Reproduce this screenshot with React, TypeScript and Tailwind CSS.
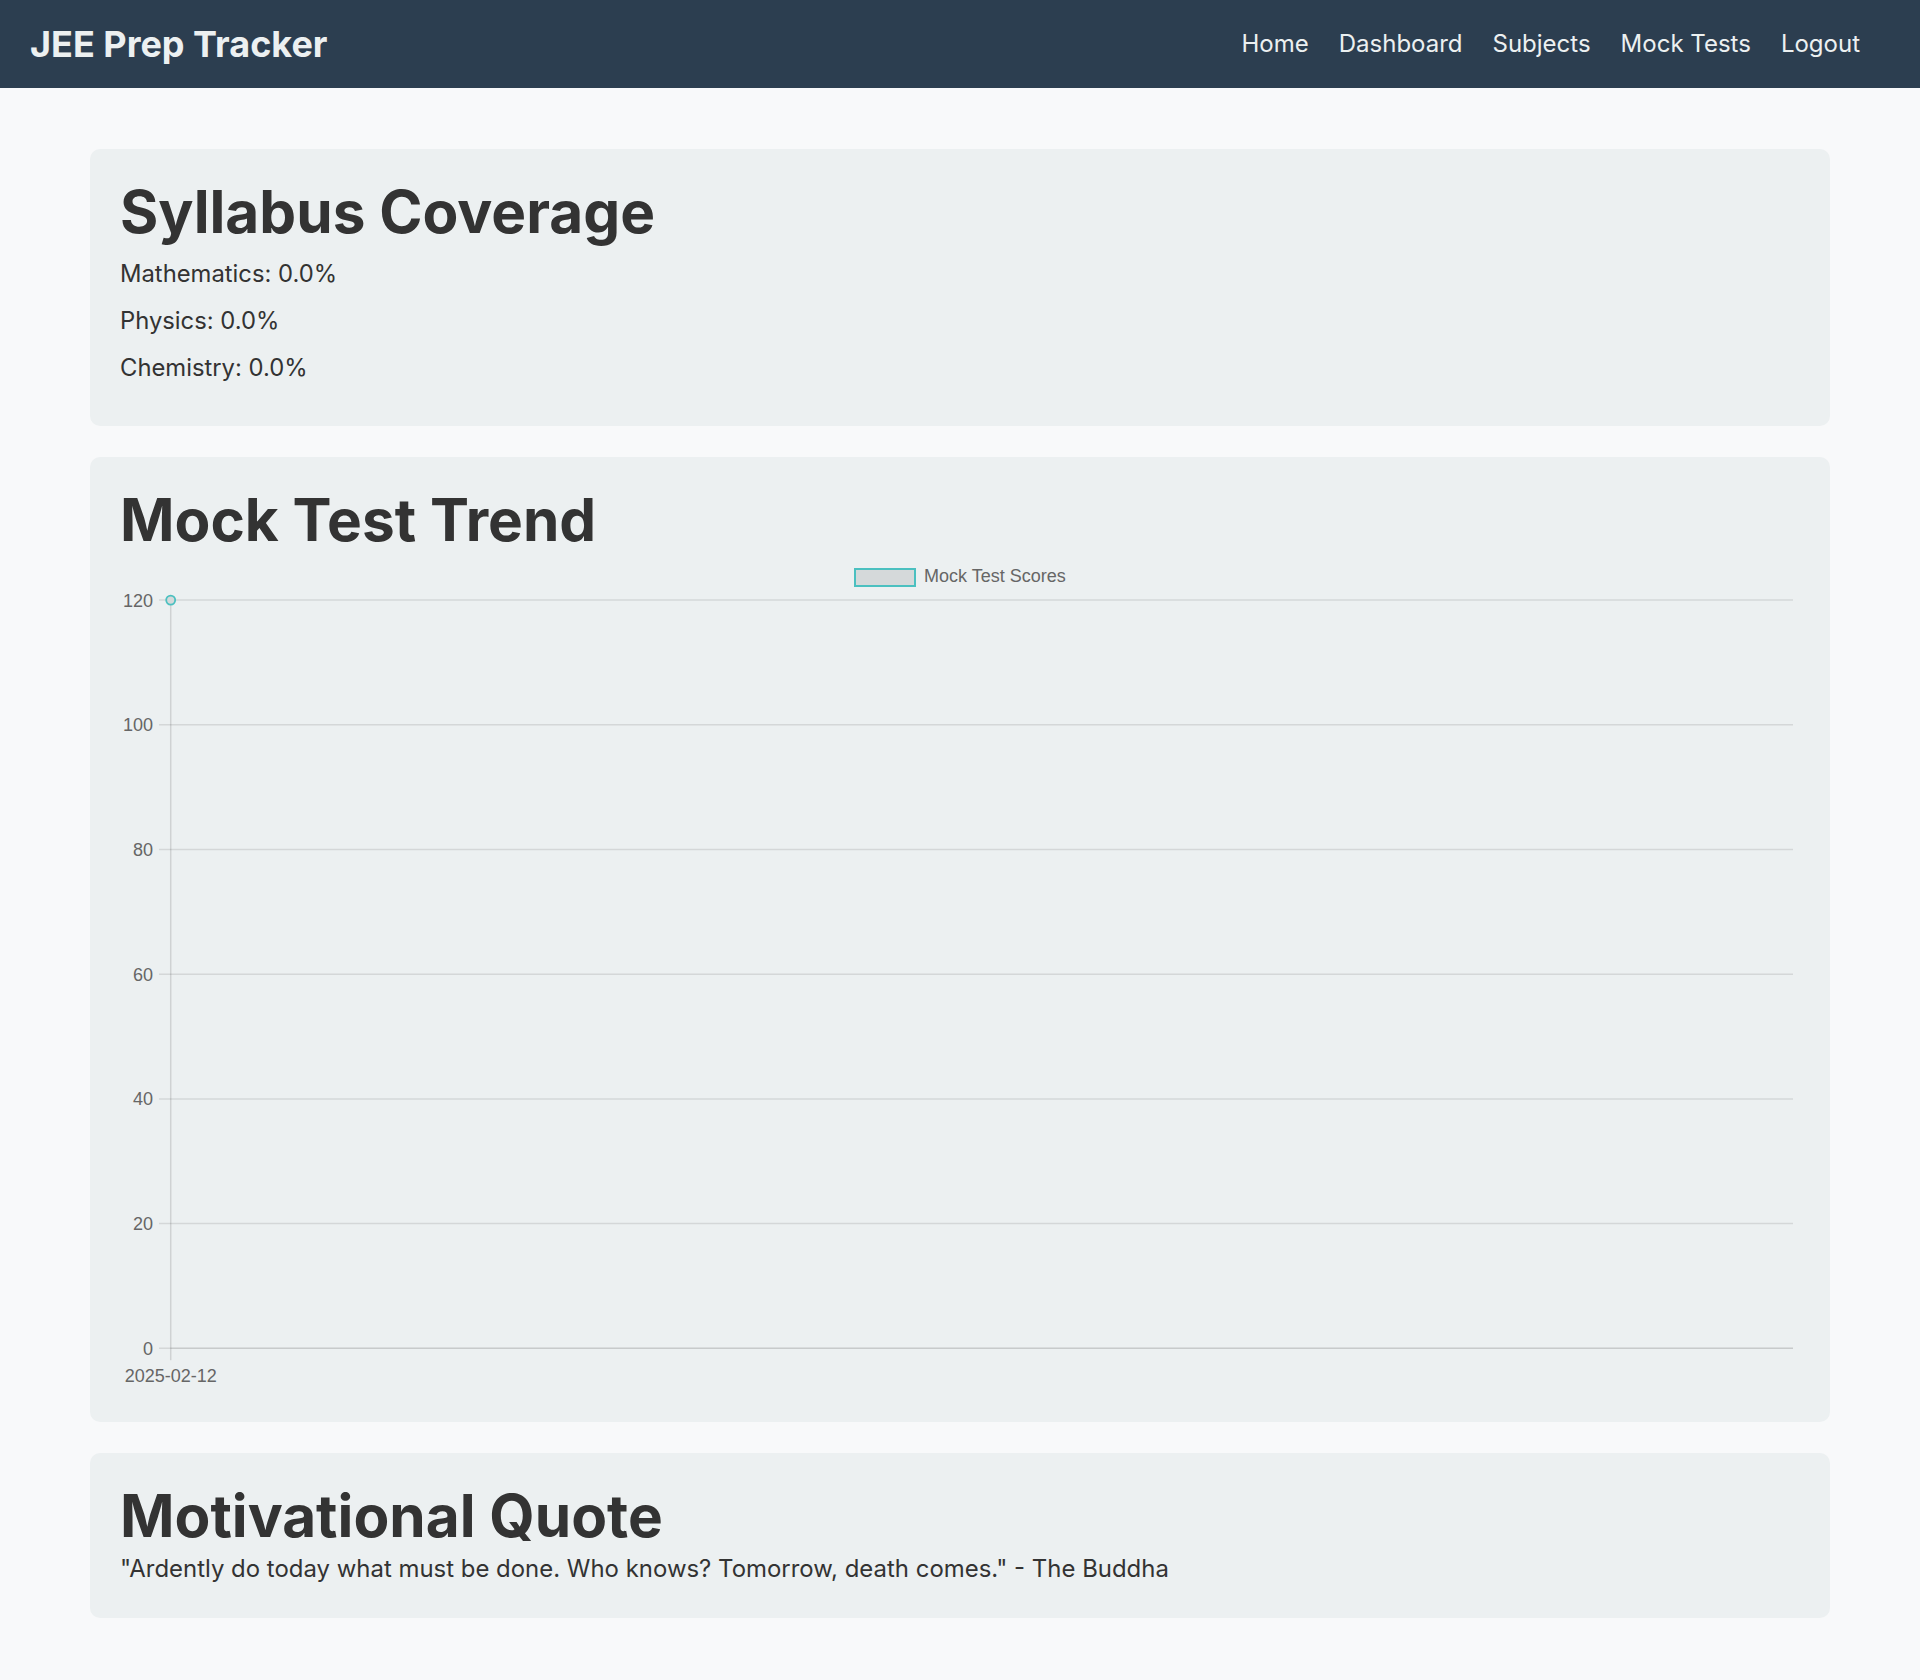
import React from "react";

const gridColor = "rgba(0,0,0,0.1)";
const teal = "rgb(75,192,192)";

function Chart() {
  const y0 = 793.3;
  const step = 124.7;
  const values = [0, 20, 40, 60, 80, 100, 120];
  const axisX = 50.7;
  const yTop = y0 - 6 * step;
  return (
    <svg width="1680" height="837" viewBox="0 0 1680 837" className="block">
      {/* legend */}
      <rect x="735" y="14" width="60" height="17" fill="#d5d9da" stroke={teal} strokeWidth="2" />
      <text x="804" y="27.3" fontSize="18" fill="#666" fontFamily="'Liberation Sans', Arial, sans-serif">
        Mock Test Scores
      </text>
      {/* horizontal grid lines */}
      {values.map((v, i) => {
        const y = y0 - i * step;
        return (
          <g key={v}>
            <line x1="39" x2="1673" y1={y} y2={y} stroke={gridColor} strokeWidth="1.5" />
            <text
              x="33"
              y={y + 6.4}
              fontSize="18"
              fill="#666"
              textAnchor="end"
              fontFamily="'Liberation Sans', Arial, sans-serif"
            >
              {v}
            </text>
          </g>
        );
      })}
      {/* y axis */}
      <line x1={axisX} x2={axisX} y1={yTop} y2={y0 + 12} stroke="rgba(0,0,0,0.12)" strokeWidth="1.5" />
      <line x1={axisX} x2={1673} y1={y0} y2={y0} stroke="rgba(0,0,0,0.06)" strokeWidth="1.5" />
      {/* x label */}
      <text
        x={axisX}
        y="826.7"
        fontSize="18"
        fill="#666"
        textAnchor="middle"
        fontFamily="'Liberation Sans', Arial, sans-serif"
      >
        2025-02-12
      </text>
      {/* point */}
      <circle cx={axisX} cy={yTop} r="4.5" fill="#d5d9da" stroke={teal} strokeWidth="1.8" />
    </svg>
  );
}

export default function App() {
  return (
    <div className="min-h-screen bg-[#f8f9fa] text-[#333333]" style={{ fontFamily: "Inter, 'Noto Sans', sans-serif" }}>
      <header className="h-[88px] bg-[#2c3e50] flex items-center justify-between pl-[30px] pr-[60px]">
        <div className="text-[36px] font-bold text-[#ecf0f1] leading-none">JEE Prep Tracker</div>
        <nav className="flex items-center gap-[30px] text-[24px] text-[#ecf0f1]">
          <a>Home</a>
          <a>Dashboard</a>
          <a>Subjects</a>
          <a>Mock Tests</a>
          <a>Logout</a>
        </nav>
      </header>
      <main className="px-[90px] pt-[61px] pb-[62px] flex flex-col gap-[31px]">
        <section className="bg-[#ecf0f1] rounded-[10px] px-[30px] pt-[28px] pb-[42px]">
          <h1 className="text-[58.5px] leading-[70px] font-bold mb-[10px]">Syllabus Coverage</h1>
          <div className="flex flex-col gap-[14px] text-[23.8px] leading-[33px]">
            <p>Mathematics: 0.0%</p>
            <p>Physics: 0.0%</p>
            <p>Chemistry: 0.0%</p>
          </div>
        </section>
        <section className="bg-[#ecf0f1] rounded-[10px] px-[30px] pt-[28px] pb-[30px]">
          <h1 className="text-[58.5px] leading-[70px] font-bold">Mock Test Trend</h1>
          <Chart />
        </section>
        <section className="bg-[#ecf0f1] rounded-[10px] px-[30px] pt-[28px] pb-[33px]">
          <h1 className="text-[58.5px] leading-[70px] font-bold mb-[1px]">Motivational Quote</h1>
          <p className="text-[23.95px] leading-[33px]">
            "Ardently do today what must be done. Who knows? Tomorrow, death comes." - The Buddha
          </p>
        </section>
      </main>
    </div>
  );
}
